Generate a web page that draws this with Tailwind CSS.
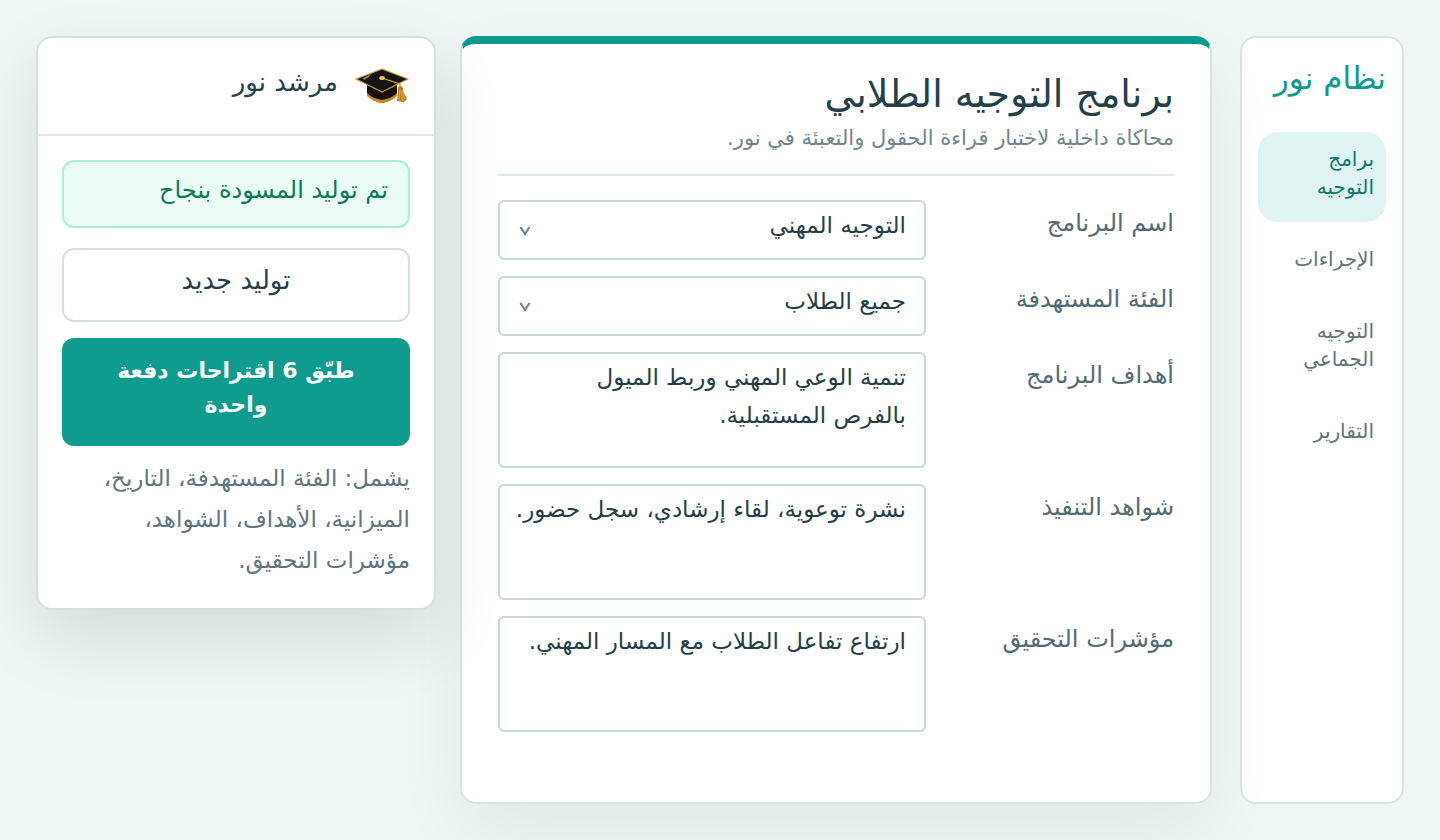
<!DOCTYPE html>
<html lang="ar" dir="rtl">
<head>
    <meta charset="UTF-8">
    <meta name="viewport" content="width=device-width, initial-scale=1.0">
    <title>برنامج التوجيه الطلابي - نظام نور</title>
    <script src="https://cdn.jsdelivr.net/npm/@tailwindcss/browser@4"></script>
</head>
<body class="bg-[#eef7f6] text-[#243f48] font-['DejaVu_Sans','Noto_Sans',sans-serif] min-h-screen">
    <div class="flex items-start min-h-screen p-9">

        <!-- القائمة الجانبية -->
        <aside class="w-41 shrink-0 self-stretch bg-white border-2 border-[#d6e7e3] rounded-2xl p-4 ml-7">
            <h2 class="text-[#0f9b8e] text-[31px] leading-10 mt-1 mb-8.5 whitespace-nowrap">نظام نور</h2>
            <nav class="flex flex-col gap-2.5 text-xl leading-7 text-[#60757d]">
                <a href="#" class="block rounded-[20px] bg-[#e0f4f1] text-[#0f766e] px-3 pt-[13px] pb-[21px]">برامج التوجيه</a>
                <a href="#" class="block px-3 pt-[13px] pb-[21px]">الإجراءات</a>
                <a href="#" class="block px-3 pt-[13px] pb-[21px]">التوجيه الجماعي</a>
                <a href="#" class="block px-3 pt-[13px] pb-[21px]">التقارير</a>
            </nav>
        </aside>

        <!-- نموذج البرنامج -->
        <main class="flex-1 min-w-0 self-stretch bg-white border-2 border-t-8 border-[#d6e7e3] border-t-[#0f9b8e] rounded-2xl px-9 pt-6 pb-16 ml-6 shadow-[0_28px_72px_rgba(0,0,0,0.06)]">
            <header class="border-b-2 border-[#dcebe8] pb-4.5 mb-6">
                <h1 class="text-[38px] leading-13">برنامج التوجيه الطلابي</h1>
                <p class="text-[21px] leading-9 text-[#71858c]">محاكاة داخلية لاختبار قراءة الحقول والتعبئة في نور.</p>
            </header>

            <form class="flex flex-col gap-4 text-[23px]">
                <div class="flex items-start">
                    <label for="program" class="flex-1 pt-[5px] text-2xl leading-9 text-[#536b73]">اسم البرنامج</label>
                    <div class="relative w-107">
                        <select id="program" class="appearance-none block w-full h-15 bg-white border-2 border-[#c6dad5] rounded-md px-4.5 pb-2.5 focus:outline-none focus:border-[#0f9b8e]">
                            <option>التوجيه المهني</option>
                        </select>
                        <svg class="absolute left-5 top-6 w-3.5 h-3.5 pointer-events-none" viewBox="0 0 14 14" fill="none" stroke="#71858c" stroke-width="2.200"><path d="M2.500 3 7 10 11.500 3"/></svg>
                    </div>
                </div>
                <div class="flex items-start">
                    <label for="target" class="flex-1 pt-[5px] text-2xl leading-9 text-[#536b73]">الفئة المستهدفة</label>
                    <div class="relative w-107">
                        <select id="target" class="appearance-none block w-full h-15 bg-white border-2 border-[#c6dad5] rounded-md px-4.5 pb-2.5 focus:outline-none focus:border-[#0f9b8e]">
                            <option>جميع الطلاب</option>
                        </select>
                        <svg class="absolute left-5 top-6 w-3.5 h-3.5 pointer-events-none" viewBox="0 0 14 14" fill="none" stroke="#71858c" stroke-width="2.200"><path d="M2.500 3 7 10 11.500 3"/></svg>
                    </div>
                </div>
                <div class="flex items-start">
                    <label for="goals" class="flex-1 pt-[5px] text-2xl leading-9 text-[#536b73]">أهداف البرنامج</label>
                    <textarea id="goals" class="block w-107 h-29 resize-none bg-white border-2 border-[#c6dad5] rounded-md pr-4.5 pl-2 pt-1 leading-[38px] focus:outline-none focus:border-[#0f9b8e]">تنمية الوعي المهني وربط الميول
بالفرص المستقبلية.</textarea>
                </div>
                <div class="flex items-start">
                    <label for="evidence" class="flex-1 pt-[5px] text-2xl leading-9 text-[#536b73]">شواهد التنفيذ</label>
                    <textarea id="evidence" class="block w-107 h-29 resize-none bg-white border-2 border-[#c6dad5] rounded-md pr-4.5 pl-2 pt-1 leading-[38px] focus:outline-none focus:border-[#0f9b8e]">نشرة توعوية، لقاء إرشادي، سجل حضور.</textarea>
                </div>
                <div class="flex items-start">
                    <label for="indicators" class="flex-1 pt-[5px] text-2xl leading-9 text-[#536b73]">مؤشرات التحقيق</label>
                    <textarea id="indicators" class="block w-107 h-29 resize-none bg-white border-2 border-[#c6dad5] rounded-md pr-4.5 pl-2 pt-1 leading-[38px] focus:outline-none focus:border-[#0f9b8e]">ارتفاع تفاعل الطلاب مع المسار المهني.</textarea>
                </div>
            </form>
        </main>

        <!-- لوحة المرشد -->
        <section class="w-100 shrink-0 bg-white border-2 border-[#cfe3de] rounded-2xl shadow-[0_28px_72px_rgba(0,0,0,0.11)]">
            <div class="flex items-start gap-4 h-24.5 pt-5 px-6 border-b-2 border-[#dcebe8]">
                <svg class="w-14 h-14 shrink-0" viewBox="0 0 56 56">
                    <path d="M13 24v13c4 4 9 7 15 8 6-1 11-4 15-8V24z" fill="#16110d"/>
                    <path d="M13 35c4 4 9 6 15 7 6-1 11-3 15-7v3c-4 4-9 6-15 7-6-1-11-3-15-7z" fill="#c98a22"/>
                    <path d="M2 21 28 11 54 21 28 34z" fill="#141414" stroke="#c79a3f" stroke-width="1.200" stroke-linejoin="round"/>
                    <path d="m9 20 6-3 3-2-3 4-5 3z" fill="#8d7f62"/>
                    <path d="m28 20 18 6v4" fill="none" stroke="#d9a12e" stroke-width="1.300"/>
                    <ellipse cx="28" cy="20" rx="2.800" ry="2" fill="#f0bd5a"/>
                    <path d="m44 29 3-1 2 2v3l4 8-3 3-7-1 1-8z" fill="#c07d18"/>
                    <path d="m46 32-1 10m2-9 2 10m-1-11 3 9" stroke="#f0b544" stroke-width=".8" fill="none"/>
                </svg>
                <h2 class="text-[26px] leading-12">مرشد نور</h2>
            </div>
            <div class="p-6 pb-[27px]">
                <p class="h-17 bg-[#eafcf5] border-2 border-[#a7f3d0] rounded-xl px-5 pt-2.5 text-2xl leading-9 text-[#0b7a5b] whitespace-nowrap">تم توليد المسودة بنجاح</p>
                <button class="flex justify-center w-full mt-5 h-18.5 bg-white border-2 border-[#cfe3de] rounded-xl px-5 pt-3 text-[26px] leading-9">توليد جديد</button>
                <button class="block w-full mt-4 bg-[#0f9b8e] text-white rounded-xl px-10 pt-4 pb-6 text-[22px] leading-[34px] font-bold">طبّق 6 اقتراحات دفعة واحدة</button>
                <p class="mt-3 text-[23px] leading-[41px] text-[#60757d]">يشمل: الفئة المستهدفة، التاريخ، الميزانية، الأهداف، الشواهد، مؤشرات التحقيق.</p>
            </div>
        </section>
    </div>
</body>
</html>
